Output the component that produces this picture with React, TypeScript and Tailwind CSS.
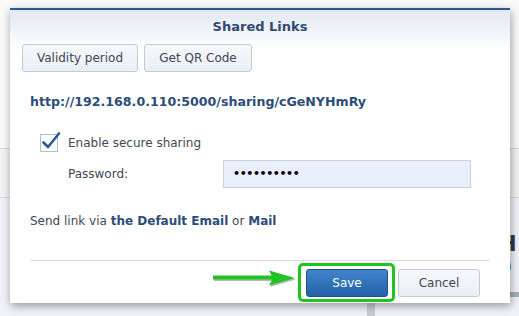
const font = { fontFamily: '"DejaVu Sans", Verdana, sans-serif' };

function Arrow() {
  return (
    <svg width="82" height="20" viewBox="0 0 82 20" className="-mt-[5px] shrink-0">
      <g transform="translate(1,1.5)" fill="rgba(0,0,0,0.28)">
        <rect x="0" y="5.5" width="60" height="4" />
        <polygon points="56,0.5 82,8 56,15.5 60,8" />
      </g>
      <g fill="#22c322">
        <rect x="0" y="5.5" width="60" height="4" />
        <polygon points="56,0.5 82,8 56,15.5 60,8" />
      </g>
    </svg>
  );
}

function Check() {
  return (
    <div className="relative w-[18px] h-[18px] border border-[#b3bfcc] bg-white shrink-0">
      <svg width="22" height="22" viewBox="0 0 22 22" className="absolute -left-[1px] -top-[5px]">
        <path d="M3.5 12.5 L8 17 L19 3.5" fill="none" stroke="#2b5a94" strokeWidth="2.6" strokeLinecap="round" strokeLinejoin="round" />
      </svg>
    </div>
  );
}

export default function App() {
  return (
    <div className="relative w-[519px] h-[316px] overflow-hidden bg-[#f3f4f7]" style={font}>
      {/* page behind the dialog */}
      <div className="flex flex-col h-full">
        <div className="h-[149px] bg-[#fafafa] border-b border-[#d9dbde]" />
        <div className="h-[49px] bg-[#f3f3f4] border-b border-[#d9dbde]" />
        <div className="flex-1 flex bg-[#f1f3f8]">
          <div className="w-[374px]" />
          <div className="w-[8px] bg-[#c9cdd3]" />
          <div className="w-[126px]" />
          <div className="flex flex-col pt-[35px]">
            <span className="text-[21px] font-bold leading-[22px] text-[#333a44]">H</span>
            <span className="text-[18px] font-bold leading-[22px] mt-[1px] text-[#1e8ad8]">0</span>
            <div className="mt-[14px] h-[5px] w-[20px] bg-[#a9b0b9]" />
          </div>
        </div>
      </div>

      {/* dialog */}
      <div className="absolute left-[10px] top-[8px] w-[500px] border-t-[2px] border-[#2d5a8e] bg-[linear-gradient(to_bottom,#e2e8f2_0px,#ffffff_40px)] shadow-[1px_3px_9px_rgba(0,0,0,0.38)]">
        <div className="h-[34px] flex items-center justify-center text-[13px] font-bold text-[#2f4b70]">
          Shared Links
        </div>

        <div className="h-[28px] flex gap-[6px] pl-[12px]">
          <button className="w-[116px] h-[28px] rounded-[3px] border border-[#c2cbd6] bg-[linear-gradient(to_bottom,#f6f8fb,#eaeef3)] text-[12px] text-[#3e4854]">
            Validity period
          </button>
          <button className="w-[108px] h-[28px] rounded-[3px] border border-[#c2cbd6] bg-[linear-gradient(to_bottom,#f6f8fb,#eaeef3)] text-[12px] text-[#3e4854]">
            Get QR Code
          </button>
        </div>

        <div className="mt-[22px] pl-[20px] leading-[16px] text-[12.6px] font-bold text-[#2c4d78]">
          http://192.168.0.110:5000/sharing/cGeNYHmRy
        </div>

        <div className="mt-[24px] h-[18px] flex items-center gap-[10px] pl-[30px]">
          <Check />
          <span className="text-[12px] text-[#3e4854]">Enable secure sharing</span>
        </div>

        <div className="mt-[8px] h-[28px] flex items-center pl-[58px]">
          <span className="w-[155px] text-[12px] text-[#3e4854]">Password:</span>
          <div className="w-[248px] h-[28px] flex items-center pl-[9px] bg-[#e8effb] border border-[#c6d2e2]">
            <span className="text-[11px] font-bold tracking-[-0.4px] text-black">••••••••••</span>
          </div>
        </div>

        <div className="mt-[25px] pl-[20px] leading-[16px] text-[12px] text-[#3e4854]">
          Send link via <span className="font-bold text-[#2c4d78]">the Default Email</span> or{" "}
          <span className="font-bold text-[#2c4d78]">Mail</span>
        </div>

        <div className="mt-[31px] mx-[20px] h-px bg-[#d9dde2]" />

        <div className="mt-[2px] pb-[1px] pr-[30px] flex items-center justify-end">
          <Arrow />
          <div className="ml-[3px] border-[3px] border-[#1fc41f] rounded-[5px] pl-[5px] pr-[4px] pt-[3px] pb-[2px]">
            <button className="w-[82px] h-[28px] rounded-[3px] border border-[#1f4f8c] bg-[linear-gradient(to_bottom,#4284cc,#2361a8)] text-[12px] text-white block">
              Save
            </button>
          </div>
          <button className="ml-[3px] w-[82px] h-[28px] rounded-[3px] border border-[#c2cbd6] bg-[linear-gradient(to_bottom,#f6f8fb,#eaeef3)] text-[12px] text-[#3e4854]">
            Cancel
          </button>
        </div>
      </div>
    </div>
  );
}
